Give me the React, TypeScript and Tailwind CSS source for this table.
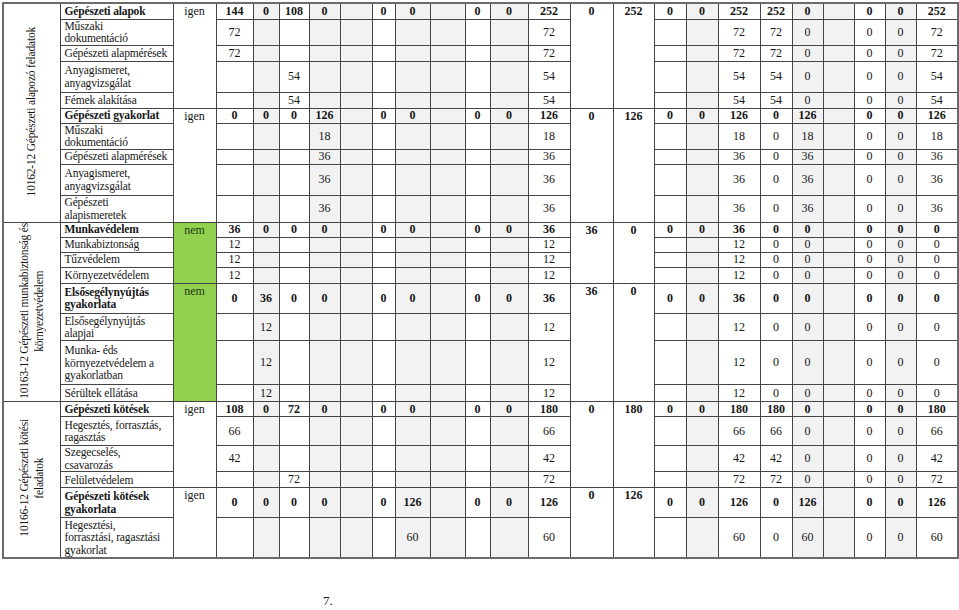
import React from "react";

type Row = {
  name: string[];
  h: string;
  left: string[]; // c1..c11
  right: string[]; // c14..c22
  main?: { flag: string; span: number; green?: boolean; c12: string; c13: string };
};

type Group = { label: string[]; rows: Row[] };

// c1..c11 with a single value in one column (and its total in c11)
const L = (idx: number, v: string) => {
  const a = Array(11).fill("");
  a[idx] = v;
  a[10] = v;
  return a;
};

const R = (a: string, b: string, c: string, d = "0", e = "0", f = a) => ["", "", a, b, c, "", d, e, f];

const groups: Group[] = [
  {
    label: ["10162-12 Gépészeti alapozó feladatok"],
    rows: [
      {
        name: ["Gépészeti alapok"],
        h: "h-[16px]",
        left: ["144", "0", "108", "0", "", "0", "0", "", "0", "0", "252"],
        right: ["0", "0", "252", "252", "0", "", "0", "0", "252"],
        main: { flag: "igen", span: 5, c12: "0", c13: "252" },
      },
      { name: ["Műszaki", "dokumentáció"], h: "h-[26px]", left: L(0, "72"), right: R("72", "72", "0") },
      { name: ["Gépészeti alapmérések"], h: "h-[16px]", left: L(0, "72"), right: R("72", "72", "0") },
      { name: ["Anyagismeret,", "anyagvizsgálat"], h: "h-[31px]", left: L(2, "54"), right: R("54", "54", "0") },
      { name: ["Fémek alakítása"], h: "h-[16px]", left: L(2, "54"), right: R("54", "54", "0") },
      {
        name: ["Gépészeti gyakorlat"],
        h: "h-[15px]",
        left: ["0", "0", "0", "126", "", "0", "0", "", "0", "0", "126"],
        right: ["0", "0", "126", "0", "126", "", "0", "0", "126"],
        main: { flag: "igen", span: 5, c12: "0", c13: "126" },
      },
      { name: ["Műszaki", "dokumentáció"], h: "h-[26px]", left: L(3, "18"), right: R("18", "0", "18") },
      { name: ["Gépészeti alapmérések"], h: "h-[15px]", left: L(3, "36"), right: R("36", "0", "36") },
      { name: ["Anyagismeret,", "anyagvizsgálat"], h: "h-[31px]", left: L(3, "36"), right: R("36", "0", "36") },
      { name: ["Gépészeti", "alapismeretek"], h: "h-[27px]", left: L(3, "36"), right: R("36", "0", "36") },
    ],
  },
  {
    label: ["10163-12 Gépészeti munkabiztonság és", "környezetvédelem"],
    rows: [
      {
        name: ["Munkavédelem"],
        h: "h-[15px]",
        left: ["36", "0", "0", "0", "", "0", "0", "", "0", "0", "36"],
        right: ["0", "0", "36", "0", "0", "", "0", "0", "0"],
        main: { flag: "nem", span: 4, green: true, c12: "36", c13: "0" },
      },
      { name: ["Munkabiztonság"], h: "h-[15px]", left: L(0, "12"), right: R("12", "0", "0", "0", "0", "0") },
      { name: ["Tűzvédelem"], h: "h-[15px]", left: L(0, "12"), right: R("12", "0", "0", "0", "0", "0") },
      { name: ["Környezetvédelem"], h: "h-[16px]", left: L(0, "12"), right: R("12", "0", "0", "0", "0", "0") },
      {
        name: ["Elsősegélynyújtás", "gyakorlata"],
        h: "h-[29px]",
        left: ["0", "36", "0", "0", "", "0", "0", "", "0", "0", "36"],
        right: ["0", "0", "36", "0", "0", "", "0", "0", "0"],
        main: { flag: "nem", span: 4, green: true, c12: "36", c13: "0" },
      },
      { name: ["Elsősegélynyújtás", "alapjai"], h: "h-[27px]", left: L(1, "12"), right: R("12", "0", "0", "0", "0", "0") },
      {
        name: ["Munka- éds", "környezetvédelem a", "gyakorlatban"],
        h: "h-[44px]",
        left: L(1, "12"),
        right: R("12", "0", "0", "0", "0", "0"),
      },
      { name: ["Sérültek ellátása"], h: "h-[17px]", left: L(1, "12"), right: R("12", "0", "0", "0", "0", "0") },
    ],
  },
  {
    label: ["10166-12 Gépészeti kötési", "feladatok"],
    rows: [
      {
        name: ["Gépészeti kötések"],
        h: "h-[15px]",
        left: ["108", "0", "72", "0", "", "0", "0", "", "0", "0", "180"],
        right: ["0", "0", "180", "180", "0", "", "0", "0", "180"],
        main: { flag: "igen", span: 4, c12: "0", c13: "180" },
      },
      { name: ["Hegesztés, forrasztás,", "ragasztás"], h: "h-[29px]", left: L(0, "66"), right: R("66", "66", "0") },
      { name: ["Szegecselés,", "csavarozás"], h: "h-[26px]", left: L(0, "42"), right: R("42", "42", "0") },
      { name: ["Felületvédelem"], h: "h-[16px]", left: L(2, "72"), right: R("72", "72", "0") },
      {
        name: ["Gépészeti kötések", "gyakorlata"],
        h: "h-[30px]",
        left: ["0", "0", "0", "0", "", "0", "126", "", "0", "0", "126"],
        right: ["0", "0", "126", "0", "126", "", "0", "0", "126"],
        main: { flag: "igen", span: 2, c12: "0", c13: "126" },
      },
      {
        name: ["Hegesztési,", "forrasztási, ragasztási", "gyakorlat"],
        h: "h-[40px]",
        left: L(6, "60"),
        right: R("60", "0", "60"),
      },
    ],
  },
];

const cols = [
  "w-[57px]", "w-[113px]", "w-[43px]",
  "w-[37px]", "w-[26px]", "w-[30px]", "w-[31px]", "w-[32px]", "w-[23px]", "w-[35px]", "w-[35px]",
  "w-[25px]", "w-[38px]", "w-[42px]", "w-[43px]", "w-[41px]",
  "w-[32px]", "w-[32px]", "w-[42px]", "w-[32px]", "w-[31px]", "w-[31px]", "w-[31px]", "w-[31px]", "w-[42px]",
];

// shaded columns
const grayLeft = [1, 3, 4, 6, 7, 9];
const grayRight = [1, 4, 5, 7];

const cell = "border border-[#454545] p-0 text-center align-middle";

export default function App() {
  return (
    <div className="w-[959px] h-[610px] overflow-hidden bg-white text-[#161616] [font-family:'Liberation_Serif',serif] text-[12px] leading-[13px] pt-[2px] pl-[2px]">
      <table className="table-fixed border-collapse w-[955px] border-2 border-[#6b6b6b]">
        <colgroup>
          {cols.map((c, i) => (
            <col key={i} className={c} />
          ))}
        </colgroup>
        <tbody>
          {groups.map((g, gi) =>
            g.rows.map((r, ri) => (
              <tr key={`${gi}-${ri}`} className={r.h}>
                {ri === 0 && (
                  <td rowSpan={g.rows.length} className={`${cell} text-[11.5px] tracking-[-0.2px]`}>
                    <div className="inline-block [writing-mode:vertical-rl] rotate-180 leading-[15px] whitespace-nowrap">
                      {g.label.map((l, li) => (
                        <div key={li}>{l}</div>
                      ))}
                    </div>
                  </td>
                )}
                <td
                  className={`${cell} text-left pl-[4px] whitespace-nowrap overflow-hidden text-[11.5px] leading-[12.5px] tracking-[-0.15px] ${
                    r.main ? "font-bold" : ""
                  }`}
                >
                  {r.name.map((n, ni) => (
                    <div key={ni}>{n}</div>
                  ))}
                </td>
                {r.main && (
                  <td
                    rowSpan={r.main.span}
                    className={`${cell} align-top pt-[1px] ${r.main.green ? "bg-[#92d050] text-[#1f3a12]" : ""}`}
                  >
                    {r.main.flag}
                  </td>
                )}
                {r.left.map((v, i) => (
                  <td
                    key={`l${i}`}
                    className={`${cell} ${grayLeft.includes(i) ? "bg-[#f2f2f2]" : ""} ${r.main ? "font-bold" : ""}`}
                  >
                    {v}
                  </td>
                ))}
                {r.main && (
                  <>
                    <td rowSpan={r.main.span} className={`${cell} align-top pt-[1px] font-bold`}>
                      {r.main.c12}
                    </td>
                    <td rowSpan={r.main.span} className={`${cell} align-top pt-[1px] font-bold`}>
                      {r.main.c13}
                    </td>
                  </>
                )}
                {r.right.map((v, i) => (
                  <td
                    key={`r${i}`}
                    className={`${cell} ${grayRight.includes(i) ? "bg-[#f2f2f2]" : ""} ${r.main ? "font-bold" : ""}`}
                  >
                    {v}
                  </td>
                ))}
              </tr>
            ))
          )}
        </tbody>
      </table>
      <div className="mt-[35px] pl-[321px] text-[13px] leading-[13px]">7.</div>
    </div>
  );
}
